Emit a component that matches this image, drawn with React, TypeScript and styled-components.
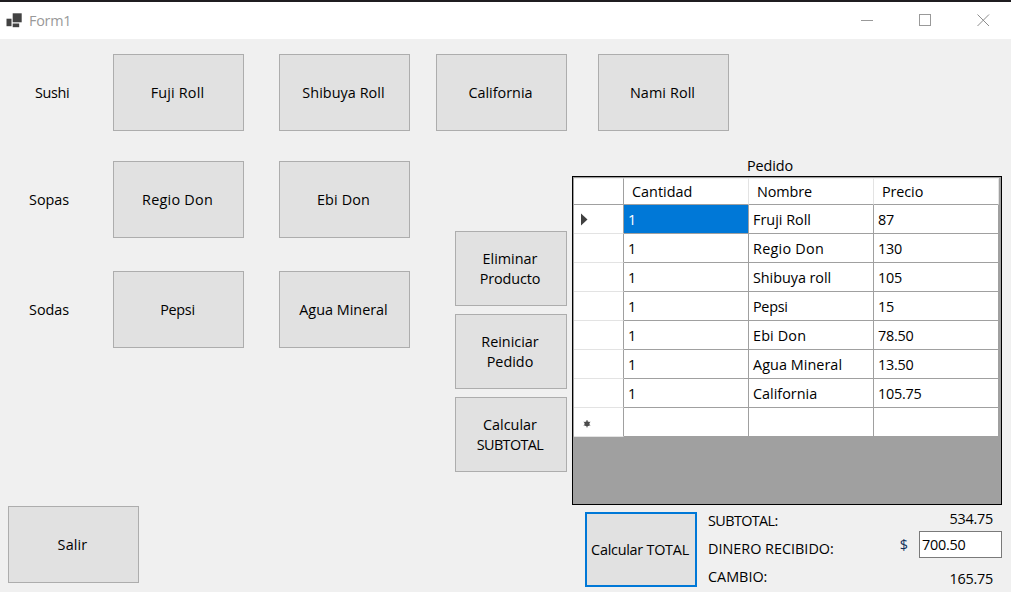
import React from "react";
import styled, { createGlobalStyle } from "styled-components";

const GlobalStyle = createGlobalStyle`
  * { box-sizing: border-box; }
  body {
    margin: 0;
    overflow: hidden;
    background: #f0f0f0;
    color: #000;
    font-family: "Open Sans", "Noto Sans", sans-serif;
    font-size: 14.4px;
    line-height: 20px;
  }
`;

const Window = styled.div`
  width: 1011px;
  height: 592px;
  display: flex;
  flex-direction: column;
  background: #f0f0f0;
  border-top: 2px solid #1f1d20;
  overflow: hidden;
`;

const TitleBar = styled.header`
  height: 37px;
  flex: none;
  display: flex;
  align-items: center;
  padding: 0 21px 0 6px;
  background: #fff;
`;

const Title = styled.span`
  flex: 1;
  margin-left: 7px;
  color: #999;
  letter-spacing: -0.25px;
`;

const WindowControls = styled.div`
  display: flex;
  gap: 45px;
  margin-top: -1px;
`;

const Text = styled.span<{ $track?: number }>`
  letter-spacing: ${(p) => p.$track ?? 0}px;
  white-space: pre;
`;

const Button = styled.button<{ $small?: boolean; $focused?: boolean }>`
  width: ${(p) => (p.$small ? 112 : 131)}px;
  height: ${(p) => (p.$small ? 75 : 77)}px;
  flex: none;
  display: flex;
  align-items: center;
  justify-content: center;
  padding: 0 2px 0 0;
  border: ${(p) => (p.$focused ? "2px solid #0078d7" : "1px solid #adadad")};
  background: #e1e1e1;
  color: #000;
  font: inherit;
  text-align: center;
`;

const CategoryRow = styled.div`
  display: flex;
  align-items: center;
`;

const CategoryName = styled.div<{ $indent: number }>`
  width: 113px;
  padding-left: ${(p) => p.$indent}px;
`;

const SushiRow = styled(CategoryRow)`
  padding-top: 15px;
  ${Button}:nth-of-type(1) { margin-right: 35px; }
  ${Button}:nth-of-type(2) { margin-right: 26px; }
  ${Button}:nth-of-type(3) { margin-right: 31px; }
`;

const Main = styled.div`
  flex: 1;
  display: flex;
`;

const MenuColumn = styled.div`
  width: 455px;
  display: flex;
  flex-direction: column;
  gap: 33px;
  padding: 30px 0 9px;
  ${Button} + ${Button} { margin-left: 35px; }
`;

const ExitRow = styled.div`
  margin-top: auto;
  padding-left: 8px;
`;

const ActionColumn = styled.div`
  width: 117px;
  display: flex;
  flex-direction: column;
  gap: 8px;
  padding-top: 100px;
`;

const OrderColumn = styled.div`
  width: 430px;
  display: flex;
  flex-direction: column;
`;

const OrderTitle = styled.div`
  height: 45px;
  padding: 25px 0 0 175px;
`;

const GridFrame = styled.div`
  height: 329px;
  border: 1px solid #000;
  background: #a0a0a0;
  padding: 1px 0 0 1px;
`;

const GridRow = styled.div<{ $header?: boolean }>`
  width: 425px;
  height: ${(p) => (p.$header ? 27 : 29)}px;
  display: grid;
  grid-template-columns: 50px 125px 125px 125px;
`;

const RowHeader = styled.div`
  display: flex;
  align-items: center;
  padding-left: 7px;
  background: #fff;
  border-right: 1px solid #a0a0a0;
  border-bottom: 1px solid #e3e3e3;
`;

const ColumnHeader = styled.div<{ $corner?: boolean }>`
  display: flex;
  align-items: center;
  padding-left: 8px;
  background: #fff;
  border-top: 1px solid #f0f0f0;
  border-right: 1px solid ${(p) => (p.$corner ? "#a0a0a0" : "#e3e3e3")};
  border-bottom: 1px solid #a0a0a0;
`;

const Cell = styled.div<{ $selected?: boolean }>`
  display: flex;
  align-items: center;
  padding: 1px 0 0 4px;
  background: ${(p) => (p.$selected ? "#0078d7" : "#fff")};
  color: ${(p) => (p.$selected ? "#fff" : "#000")};
  border-right: 1px solid #a0a0a0;
  border-bottom: 1px solid #a0a0a0;
`;

const Summary = styled.div`
  display: flex;
  padding: 7px 0 0 13px;
`;

const SummaryLabels = styled.div`
  width: 180px;
  display: flex;
  flex-direction: column;
  gap: 8px;
  padding: 0 0 0 11px;
  margin-top: -1px;
`;

const SummaryValues = styled.div`
  flex: 1;
  display: flex;
  flex-direction: column;
  align-items: flex-end;
  margin-top: -3px;
`;

const Amount = styled.div`
  padding-right: 9px;
`;

const MoneyRow = styled.div`
  display: flex;
  align-items: center;
  gap: 11px;
  margin: 2px 0 11px;
  color: #10305a;
`;

const MoneyInput = styled.div`
  width: 83px;
  height: 27px;
  padding: 3px 0 0 2px;
  border: 1px solid #7a7a7a;
  background: #fff;
  color: #000;
`;

const NUM = -0.25;

type Item = [label: string, track?: number];
const sushi: Item[] = [["Fuji Roll", 0.15], ["Shibuya Roll", 0.05], ["California"], ["Nami Roll", 0.1]];
const soups: Item[] = [["Regio Don", 0.25], ["Ebi Don", 0.15]];
const sodas: Item[] = [["Pepsi", -0.3], ["Agua Mineral"]];
const actions: Item[][] = [
  [["Eliminar"], ["Producto", -0.15]],
  [["Reiniciar"], ["Pedido"]],
  [["Calcular"], ["SUBTOTAL", -0.6]],
];
const headers: Item[] = [["Cantidad"], ["Nombre", -0.1], ["Precio", -0.1]];
const rows: [string, Item, string][] = [
  ["1", ["Fruji Roll", 0], "87"],
  ["1", ["Regio Don", 0.25], "130"],
  ["1", ["Shibuya roll", -0.05], "105"],
  ["1", ["Pepsi", -0.3], "15"],
  ["1", ["Ebi Don", 0.15], "78.50"],
  ["1", ["Agua Mineral", 0.05], "13.50"],
  ["1", ["California"], "105.75"],
  ["", [""], ""],
];

const Buttons = ({ items }: { items: Item[] }) => (
  <>
    {items.map(([label, track]) => (
      <Button key={label}>
        <Text $track={track}>{label}</Text>
      </Button>
    ))}
  </>
);

const AppIcon = () => (
  <svg width="16" height="16" viewBox="0 0 16 16" fill="#424242">
    <rect x="6.7" y="0.3" width="9" height="9" />
    <rect x="0.5" y="5.7" width="5" height="7.5" />
    <rect x="6.7" y="10.5" width="6.5" height="3.7" />
  </svg>
);

export default function App() {
  return (
    <>
      <GlobalStyle />
      <Window>
        <TitleBar>
          <AppIcon />
          <Title>Form1</Title>
          <WindowControls>
            <svg width="13" height="13" viewBox="0 0 13 13" stroke="#999" fill="none">
              <path d="M0 6.5H12" />
            </svg>
            <svg width="13" height="13" viewBox="0 0 13 13" stroke="#999" fill="none">
              <rect x="0.5" y="0.5" width="11" height="11" />
            </svg>
            <svg width="13" height="13" viewBox="0 0 13 13" stroke="#8c8c8c" fill="none">
              <path d="M0.5 0.5L12 12M12 0.5L0.5 12" />
            </svg>
          </WindowControls>
        </TitleBar>

        <SushiRow>
          <CategoryName $indent={35}><Text $track={-0.35}>Sushi</Text></CategoryName>
          <Buttons items={sushi} />
        </SushiRow>

        <Main>
          <MenuColumn>
            <CategoryRow>
              <CategoryName $indent={29}><Text>Sopas</Text></CategoryName>
              <Buttons items={soups} />
            </CategoryRow>
            <CategoryRow>
              <CategoryName $indent={29}><Text>Sodas</Text></CategoryName>
              <Buttons items={sodas} />
            </CategoryRow>
            <ExitRow>
              <Buttons items={[["Salir", 0.15]]} />
            </ExitRow>
          </MenuColumn>

          <ActionColumn>
            {actions.map(([[first, t1], [second, t2]]) => (
              <Button key={second} $small>
                <span>
                  <Text $track={t1}>{first}</Text>
                  <br />
                  <Text $track={t2}>{second}</Text>
                </span>
              </Button>
            ))}
          </ActionColumn>

          <OrderColumn>
            <OrderTitle><Text $track={-0.1}>Pedido</Text></OrderTitle>
            <GridFrame>
              <GridRow $header>
                <ColumnHeader $corner />
                {headers.map(([label, track]) => (
                  <ColumnHeader key={label}><Text $track={track}>{label}</Text></ColumnHeader>
                ))}
              </GridRow>
              {rows.map(([qty, [name, track], price], i) => (
                <GridRow key={i}>
                  <RowHeader>
                    {i === 0 && (
                      <svg width="8" height="14" viewBox="0 0 8 14" fill="#404040">
                        <path d="M0 1.5L6.5 7.5L0 13.5Z" />
                      </svg>
                    )}
                    {i === rows.length - 1 && (
                      <svg width="14" height="12" viewBox="0 0 14 12" stroke="#505050">
                        <circle cx="6" cy="7.7" r="2.5" fill="#404040" stroke="none" />
                        <path d="M6 4V11.4M2.8 6L9.2 9.4M9.2 6L2.8 9.4" />
                      </svg>
                    )}
                  </RowHeader>
                  <Cell $selected={i === 0}><Text>{qty}</Text></Cell>
                  <Cell><Text $track={track}>{name}</Text></Cell>
                  <Cell><Text $track={NUM}>{price}</Text></Cell>
                </GridRow>
              ))}
            </GridFrame>
            <Summary>
              <Button $small $focused><Text $track={-0.25}>Calcular TOTAL</Text></Button>
              <SummaryLabels>
                <Text $track={-0.6}>SUBTOTAL:</Text>
                <Text>DINERO RECIBIDO:</Text>
                <Text>CAMBIO:</Text>
              </SummaryLabels>
              <SummaryValues>
                <Amount><Text $track={NUM}>534.75</Text></Amount>
                <MoneyRow>
                  <Text>$</Text>
                  <MoneyInput><Text $track={NUM}>700.50</Text></MoneyInput>
                </MoneyRow>
                <Amount><Text $track={NUM}>165.75</Text></Amount>
              </SummaryValues>
            </Summary>
          </OrderColumn>
        </Main>
      </Window>
    </>
  );
}
